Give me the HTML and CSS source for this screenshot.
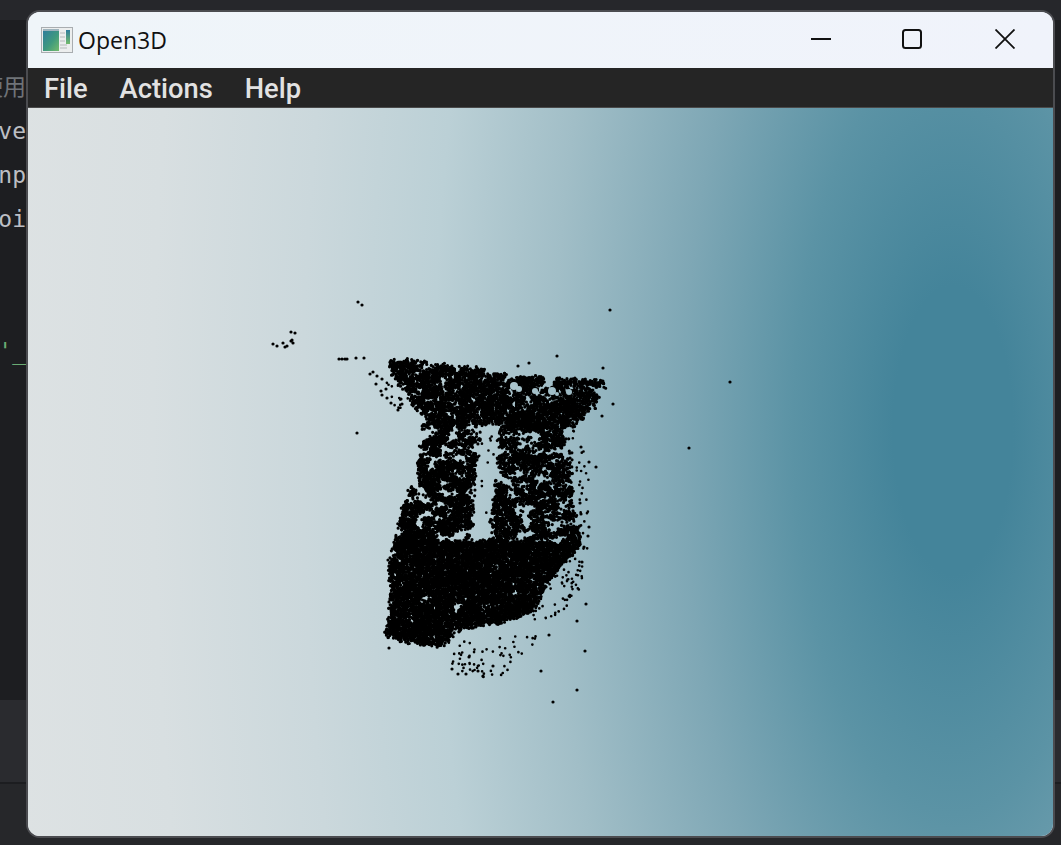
FILE: index.html
```html
<!DOCTYPE html>
<html lang="en">

<head>
    <meta charset="UTF-8">
    <meta name="viewport" content="width=device-width, initial-scale=1.0">
    <title>Open3D</title>
    <link rel="stylesheet" href="styles.css">
</head>

<body>
    <!-- editor behind the window -->
    <div class="backdrop">
        <div class="top-strip"></div>
        <div class="editor">
            <p class="code-line dim">使用</p>
            <p class="code-line">ve</p>
            <p class="code-line">np</p>
            <p class="code-line">oi</p>
            <p class="code-line"></p>
            <p class="code-line"></p>
            <p class="code-line green">'_</p>
        </div>
        <div class="panel"></div>
        <div class="status"></div>
    </div>

    <div class="window">
        <div class="titlebar">
            <svg class="app-icon" viewBox="0 0 32 28" width="32" height="28">
                <defs>
                    <linearGradient id="screen" x1="0" y1="0" x2="1" y2="1">
                        <stop offset="0" stop-color="#2f7d9c" />
                        <stop offset="0.55" stop-color="#3f9a7e" />
                        <stop offset="1" stop-color="#74bb6c" />
                    </linearGradient>
                    <linearGradient id="strip" x1="0" y1="0" x2="0" y2="1">
                        <stop offset="0" stop-color="#2f7d9c" />
                        <stop offset="1" stop-color="#74bb6c" />
                    </linearGradient>
                </defs>
                <rect x="0.5" y="0.5" width="31" height="25" fill="#eceeee" stroke="#a9adb0" />
                <rect x="2" y="4" width="16" height="20" fill="url(#screen)" />
                <rect x="2" y="2" width="16" height="2" fill="#9fb4bd" />
                <rect x="25" y="3" width="4" height="14" fill="url(#strip)" />
                <path d="M19 6h5M19 10h5M19 14h5M19 18h7M19 21h7" stroke="#b5b9bb" stroke-width="1.2" />
            </svg>
            <span class="title">Open3D</span>
            <div class="controls">
                <svg class="ctl ctl-min" viewBox="0 0 20 20" width="20" height="20">
                    <path d="M0 10h20" stroke="#111" stroke-width="2" />
                </svg>
                <svg class="ctl ctl-max" viewBox="0 0 20 20" width="20" height="20">
                    <rect x="1" y="1" width="18" height="18" rx="2.5" fill="none" stroke="#111" stroke-width="2" />
                </svg>
                <svg class="ctl ctl-close" viewBox="0 0 20 20" width="20" height="20">
                    <path d="M0.5 0.5L19.5 19.5M19.5 0.5L0.5 19.5" stroke="#111" stroke-width="1.8" />
                </svg>
            </div>
        </div>
        <div class="menubar">
            <span class="menu-item">File</span>
            <span class="menu-item">Actions</span>
            <span class="menu-item">Help</span>
        </div>
        <div class="viewer">
            <canvas id="cloud" width="1025" height="728"></canvas>
        </div>
    </div>

    <script src="script.js"></script>
</body>

</html>
```

FILE: styles.css
```css
html,
body {
    margin: 0;
    height: 100%;
}

body {
    width: 1061px;
    height: 845px;
    overflow: hidden;
    position: relative;
    background-color: #232427;
}

.backdrop {
    display: flex;
    flex-direction: column;
    height: 100%;
}

.top-strip {
    height: 20px;
    background-color: #26272b;
}

.editor {
    height: 680px;
    background-color: #1d1e21;
    padding-top: 45px;
    box-sizing: border-box;
}

.code-line {
    margin: 0;
    width: 26px;
    height: 44px;
    line-height: 44px;
    display: flex;
    justify-content: flex-end;
    overflow: hidden;
    white-space: nowrap;
    font-family: "DejaVu Sans Mono", "Noto Sans CJK SC", monospace;
    font-size: 23px;
    color: #bcbec4;
}

.code-line.dim {
    color: #6f7378;
}

.code-line.green {
    color: #6aab73;
}

.panel {
    height: 82px;
    background-color: #2a2b2f;
    border-bottom: 2px solid #1c1d20;
}

.status {
    flex: 1;
    background-color: #26272a;
}

.window {
    position: absolute;
    left: 26px;
    top: 10px;
    width: 1029px;
    height: 828px;
    box-sizing: border-box;
    border: 2px solid #4b4c50;
    border-radius: 14px;
    overflow: hidden;
    display: flex;
    flex-direction: column;
    background-color: #f0f3fa;
}

.titlebar {
    height: 56px;
    display: flex;
    align-items: center;
    padding-left: 13px;
    background: linear-gradient(90deg, #eff5f9, #f0f3fb);
}

.app-icon {
    margin-top: 1px;
}

.title {
    margin-left: 5px;
    font-family: "Open Sans", sans-serif;
    font-size: 23px;
    color: #111;
}

.controls {
    margin-left: auto;
    display: flex;
    align-items: center;
    gap: 71px;
    padding-right: 38px;
    margin-top: -3px;
}

.ctl-max {
    margin-right: 2px;
}

.menubar {
    height: 37px;
    display: flex;
    align-items: center;
    gap: 32px;
    padding-top: 2px;
    padding-left: 16px;
    background-color: #252525;
    border-bottom: 1px solid #4a4a4a;
}

.menu-item {
    font-family: Roboto, sans-serif;
    font-weight: 500;
    font-size: 27.3px;
    color: #e2e2e2;
}

.viewer {
    flex: 1;
    background: radial-gradient(ellipse 1000px 2400px at 925px 322px,
            #44849a 0%, #44849a 6%, #5b93a5 16%, #7ea7b5 27%, #a1bec7 40%,
            #bbd0d6 52%, #cbd8dc 65%, #d8dfe1 80%, #dfe3e4 100%);
}

#cloud {
    display: block;
    filter: blur(0.35px);
}
```

FILE: script.js
```js
const canvas = document.getElementById('cloud');
const ctx = canvas.getContext('2d');

// viewer sits at 28,108 in the page, all coordinates below are page coordinates
ctx.translate(-28, -108);
ctx.fillStyle = '#000';

let seed = 42;
function rnd() {
    seed = (seed * 1664525 + 1013904223) % 4294967296;
    return seed / 4294967296;
}

const grid = {};
function cellValue(x, y) {
    const key = x + ',' + y;
    if (!(key in grid)) grid[key] = rnd();
    return grid[key];
}

function noise(x, y) {
    const x0 = Math.floor(x), y0 = Math.floor(y);
    const fx = x - x0, fy = y - y0;
    const top = cellValue(x0, y0) * (1 - fx) + cellValue(x0 + 1, y0) * fx;
    const bottom = cellValue(x0, y0 + 1) * (1 - fx) + cellValue(x0 + 1, y0 + 1) * fx;
    return top * (1 - fy) + bottom * fy;
}

function inside(poly, x, y) {
    let hit = false;
    for (let i = 0, j = poly.length - 1; i < poly.length; j = i++) {
        const [xi, yi] = poly[i], [xj, yj] = poly[j];
        if ((yi > y) !== (yj > y) && x < (xj - xi) * (y - yi) / (yj - yi) + xi) hit = !hit;
    }
    return hit;
}

// points are filled in small batches, one long path is slow
let pending = 0;
function flush() {
    ctx.fill();
    ctx.beginPath();
    pending = 0;
}

function dot(x, y, r) {
    const radius = r || 1.6;
    ctx.moveTo(x + radius, y);
    ctx.arc(x, y, radius, 0, Math.PI * 2);
    if (++pending >= 400) flush();
}

// [polygon, number of points, noise threshold]
const regions = [
    // top band
    [[[388, 362], [405, 360], [430, 364], [470, 368], [510, 376], [560, 379], [605, 382], [604, 396], [590, 410], [572, 428], [500, 424], [425, 424], [412, 398], [396, 378]], 4300, 0.36],
    // left leg
    [[[424, 424], [480, 424], [474, 470], [470, 545], [396, 545], [404, 505], [418, 470]], 3000, 0.4],
    // right leg
    [[[501, 422], [572, 424], [570, 470], [574, 510], [582, 545], [490, 548], [494, 500]], 3100, 0.42],
    // bottom block
    [[[396, 540], [582, 544], [566, 560], [545, 585], [532, 612], [502, 622], [462, 628], [440, 646], [410, 643], [386, 634], [392, 600], [390, 565]], 8500, 0.16]
];

ctx.beginPath();
regions.forEach(([poly, count, limit]) => {
    let placed = 0, tries = 0;
    while (placed < count && tries < count * 60) {
        tries++;
        const x = 380 + rnd() * 240;
        const y = 355 + rnd() * 300;
        if (!inside(poly, x, y)) continue;
        if (noise(x / 6, y / 4) < limit) continue;
        dot(x + (rnd() - 0.5) * 6, y + (rnd() - 0.5) * 5);
        placed++;
    }
});

// sparse scatter round the main body
const scatter = [
    [[[530, 555], [588, 548], [580, 590], [548, 632], [530, 620]], 80],
    [[[480, 432], [498, 432], [498, 525], [476, 525]], 14],
    [[[572, 425], [590, 460], [590, 540], [574, 540]], 30],
    [[[448, 640], [545, 634], [500, 678], [455, 678]], 62],
    [[[380, 372], [405, 385], [425, 420], [395, 408]], 14]
];

scatter.forEach(([poly, count]) => {
    let placed = 0, tries = 0;
    while (placed < count && tries < count * 200) {
        tries++;
        const x = 370 + rnd() * 240;
        const y = 360 + rnd() * 330;
        if (inside(poly, x, y)) {
            dot(x, y, 1.35);
            placed++;
        }
    }
});
flush();

// small windows in the top band
ctx.globalCompositeOperation = 'destination-out';
[[514, 386, 4], [535, 391, 3], [552, 391, 4], [569, 392, 3], [519, 389, 3], [557, 394, 2]].forEach(([x, y, r]) => {
    dot(x, y, r);
    flush();
});
ctx.globalCompositeOperation = 'source-over';

// stray points read off by position
[
    [358, 302], [362, 305], [291, 332], [295, 333], [273, 344], [277, 346], [283, 343], [285, 347],
    [287, 346], [291, 341], [292, 340], [293, 343], [339, 359], [342, 359], [345, 359], [347, 359],
    [356, 358], [364, 358], [357, 433], [370, 374], [373, 372], [377, 376], [382, 379], [376, 384],
    [386, 389], [381, 391], [382, 395], [387, 398], [391, 403], [401, 399], [402, 404], [398, 410],
    [557, 356], [529, 363], [518, 366], [603, 368], [613, 404], [689, 448], [589, 462], [596, 467],
    [580, 503], [581, 514], [581, 447], [589, 527], [588, 536], [602, 416], [610, 310], [730, 382],
    [388, 560], [389, 648], [584, 547], [582, 562], [586, 604], [577, 621], [585, 651], [541, 671],
    [577, 690], [553, 702], [549, 635], [483, 676], [466, 674], [458, 674], [478, 671], [493, 666],
    [452, 669], [469, 657]
].forEach(([x, y]) => dot(x, y));
flush();
```
